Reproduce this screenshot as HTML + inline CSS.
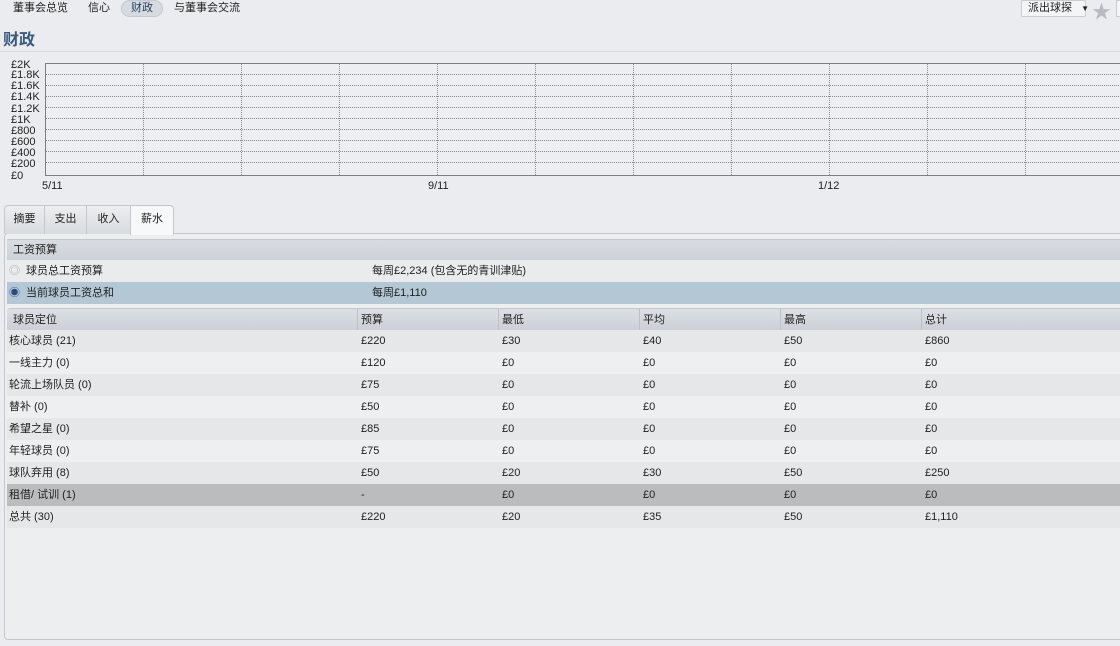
<!DOCTYPE html>
<html><head><meta charset="utf-8"><style>
*{margin:0;padding:0;box-sizing:border-box}
body{width:1120px;height:646px;overflow:hidden;background:#eaecef;font-family:"Liberation Sans","Noto Sans CJK SC",sans-serif;font-size:11px;color:#222;position:relative}
.a{position:absolute;white-space:nowrap}
.nav span{position:absolute;top:0;font-size:11px;line-height:17px;color:#222}
.pill{position:absolute;left:121px;top:0;width:42px;height:17px;border-radius:9px;background:#d6dbe2;border:1px solid #c3c9d1}
.btn{position:absolute;left:1021px;top:0;width:65px;height:17px;border:1px solid #c9ccd0;border-radius:2px;background:#f4f5f6;font-size:11px;line-height:15px;padding-left:6px;white-space:nowrap}
.chart{position:absolute;left:45px;top:63px;width:1080px;height:113px;border:1px solid #7c7f84;border-right:none;background:#eceef1}
.h{position:absolute;left:0;right:0;border-top:1px dotted #888}
.v{position:absolute;top:0;bottom:0;border-left:1px dotted #888}
.yl{position:absolute;left:11px;font-size:11px;line-height:11px;color:#222}
.tab{position:absolute;top:205px;height:29px;border:1px solid #c4c8cd;border-bottom:none;background:linear-gradient(#eceef0,#d8dbdf);font-size:11px;line-height:27px;text-align:center}
.panel{position:absolute;left:4px;top:233px;width:1120px;height:407px;border:1px solid #c4c8cd;border-radius:4px;background:#edeef0}
.row{position:absolute;left:7px;width:1113px;height:22px}
.row span{position:absolute;top:1px;line-height:21px}
</style></head><body>
<div class="nav">
<div class="pill"></div>
<span style="left:13px">董事会总览</span>
<span style="left:88px">信心</span>
<span style="left:131px;color:#2b3f5c">财政</span>
<span style="left:174px">与董事会交流</span>
</div>
<div class="btn">派出球探 <span style="font-size:8px;margin-left:6px">▼</span></div>
<div class="a" style="left:1092px;top:-3px;font-size:19px;color:#b8bcc2">★</div>
<div class="a" style="left:1116px;top:0;width:6px;height:17px;border:1px solid #c9ccd0;background:#f4f5f6"></div>
<div class="a" style="left:3px;top:31px;font-size:16px;line-height:20px;font-weight:bold;color:#3b5a7f">财政</div>
<div class="a" style="left:0;top:51px;width:1120px;border-top:1px solid #d6d9dd"></div>
<div class="chart">
<div class="h" style="top:10px"></div><div class="h" style="top:21px"></div><div class="h" style="top:32px"></div><div class="h" style="top:43px"></div><div class="h" style="top:54px"></div><div class="h" style="top:65px"></div><div class="h" style="top:76px"></div><div class="h" style="top:87px"></div><div class="h" style="top:98px"></div>
<div class="v" style="left:97px"></div><div class="v" style="left:195px"></div><div class="v" style="left:293px"></div><div class="v" style="left:391px"></div><div class="v" style="left:489px"></div><div class="v" style="left:587px"></div><div class="v" style="left:685px"></div><div class="v" style="left:783px"></div><div class="v" style="left:881px"></div><div class="v" style="left:979px"></div>
</div>
<div class="yl" style="top:60px">£2K</div><div class="yl" style="top:70px">£1.8K</div><div class="yl" style="top:81px">£1.6K</div><div class="yl" style="top:92px">£1.4K</div><div class="yl" style="top:104px">£1.2K</div><div class="yl" style="top:115px">£1K</div><div class="yl" style="top:126px">£800</div><div class="yl" style="top:137px">£600</div><div class="yl" style="top:148px">£400</div><div class="yl" style="top:159px">£200</div><div class="yl" style="top:171px">£0</div>
<div class="a" style="left:42px;top:180px">5/11</div>
<div class="a" style="left:428px;top:180px">9/11</div>
<div class="a" style="left:818px;top:180px">1/12</div>
<div class="panel"></div>
<div class="tab" style="left:4px;width:41px;border-radius:4px 0 0 0">摘要</div>
<div class="tab" style="left:44px;width:43px">支出</div>
<div class="tab" style="left:86px;width:45px">收入</div>
<div class="tab" style="left:130px;width:44px;background:#f7f8f9;border-radius:0 4px 0 0;height:30px">薪水</div>
<div class="row" style="top:239px;height:21px;background:linear-gradient(#d9dde3,#ccd1d8);border-top:1px solid #c4c8cd"><span style="left:6px;line-height:19px">工资预算</span></div>
<div class="row" style="top:260px;background:#eaebed"><span style="left:2px;color:#aaa">◎</span><span style="left:19px">球员总工资预算</span><span style="left:365px">每周£2,234 (包含无的青训津贴)</span></div>
<div class="row" style="top:282px;background:#b3c7d5"><span style="left:2px;color:#2c4a7a">◉</span><span style="left:19px">当前球员工资总和</span><span style="left:365px">每周£1,110</span></div>
<div class="row" style="top:308px;background:linear-gradient(#dcdfe4,#ccd0d6);border-top:1px solid #c4c8cd;border-radius:3px 0 0 0"><span style="left:6px;line-height:20px">球员定位</span><span style="left:354px;line-height:20px">预算</span><span style="left:495px;line-height:20px">最低</span><span style="left:636px;line-height:20px">平均</span><span style="left:777px;line-height:20px">最高</span><span style="left:918px;line-height:20px">总计</span>
<div class="a" style="left:350px;top:0;height:22px;border-left:1px solid #bcc1c8"></div><div class="a" style="left:491px;top:0;height:22px;border-left:1px solid #bcc1c8"></div><div class="a" style="left:632px;top:0;height:22px;border-left:1px solid #bcc1c8"></div><div class="a" style="left:773px;top:0;height:22px;border-left:1px solid #bcc1c8"></div><div class="a" style="left:914px;top:0;height:22px;border-left:1px solid #bcc1c8"></div></div>
<div class="row" style="top:330px;background:#e6e7e9"><span style="left:2px">核心球员 (21)</span><span style="left:354px">£220</span><span style="left:495px">£30</span><span style="left:636px">£40</span><span style="left:777px">£50</span><span style="left:918px">£860</span></div>
<div class="row" style="top:352px;background:#eeeff0"><span style="left:2px">一线主力 (0)</span><span style="left:354px">£120</span><span style="left:495px">£0</span><span style="left:636px">£0</span><span style="left:777px">£0</span><span style="left:918px">£0</span></div>
<div class="row" style="top:374px;background:#e6e7e9"><span style="left:2px">轮流上场队员 (0)</span><span style="left:354px">£75</span><span style="left:495px">£0</span><span style="left:636px">£0</span><span style="left:777px">£0</span><span style="left:918px">£0</span></div>
<div class="row" style="top:396px;background:#eeeff0"><span style="left:2px">替补 (0)</span><span style="left:354px">£50</span><span style="left:495px">£0</span><span style="left:636px">£0</span><span style="left:777px">£0</span><span style="left:918px">£0</span></div>
<div class="row" style="top:418px;background:#e6e7e9"><span style="left:2px">希望之星 (0)</span><span style="left:354px">£85</span><span style="left:495px">£0</span><span style="left:636px">£0</span><span style="left:777px">£0</span><span style="left:918px">£0</span></div>
<div class="row" style="top:440px;background:#eeeff0"><span style="left:2px">年轻球员 (0)</span><span style="left:354px">£75</span><span style="left:495px">£0</span><span style="left:636px">£0</span><span style="left:777px">£0</span><span style="left:918px">£0</span></div>
<div class="row" style="top:462px;background:#e6e7e9"><span style="left:2px">球队弃用 (8)</span><span style="left:354px">£50</span><span style="left:495px">£20</span><span style="left:636px">£30</span><span style="left:777px">£50</span><span style="left:918px">£250</span></div>
<div class="row" style="top:484px;background:#bbbcbe"><span style="left:2px">租借/ 试训 (1)</span><span style="left:354px">-</span><span style="left:495px">£0</span><span style="left:636px">£0</span><span style="left:777px">£0</span><span style="left:918px">£0</span></div>
<div class="row" style="top:506px;background:#e6e7e9"><span style="left:2px">总共 (30)</span><span style="left:354px">£220</span><span style="left:495px">£20</span><span style="left:636px">£35</span><span style="left:777px">£50</span><span style="left:918px">£1,110</span></div>
</body></html>
